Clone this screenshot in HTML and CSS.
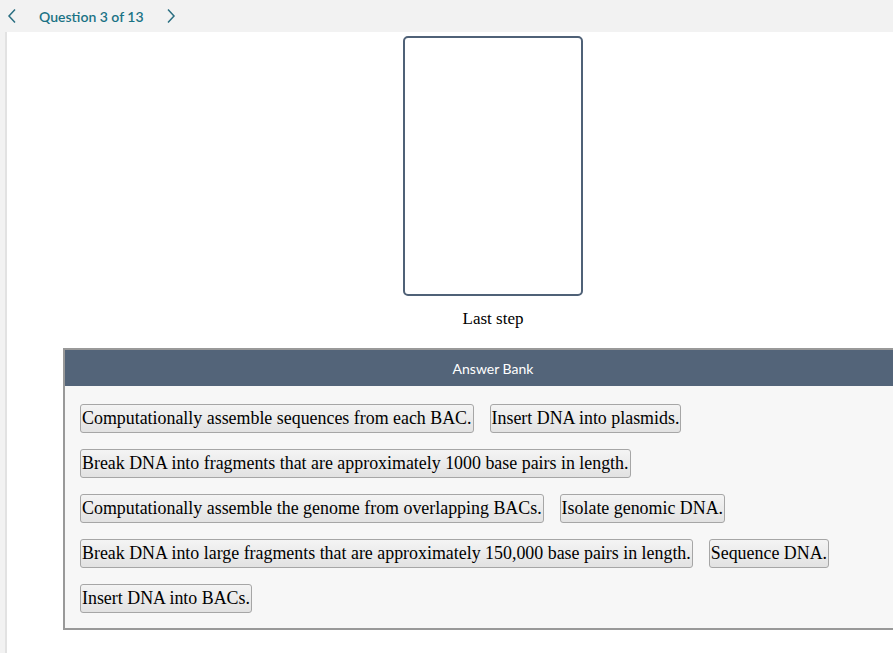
FILE: index.html
```html
<html>
	<head>
		<link rel="stylesheet" href="styles.css">
	</head>
	<body>
		<div class="topbar">
			<svg class="nav" width="10" height="16" viewBox="0 0 10 16"><path d="M8 1.5 L2 8 L8 14.5" /></svg>
			<span class="title">Question 3 of 13</span>
			<svg class="nav" width="10" height="16" viewBox="0 0 10 16"><path d="M2 1.5 L8 8 L2 14.5" /></svg>
		</div>
		<div class="page">
			<div class="content">
				<div class="slot"></div>
				<div class="slot-label">Last step</div>
				<div class="bank">
					<div class="bank-head">Answer Bank</div>
					<div class="bank-body">
						<div class="row">
							<button>Computationally assemble sequences from each BAC.</button>
							<button>Insert DNA into plasmids.</button>
						</div>
						<div class="row">
							<button>Break DNA into fragments that are approximately 1000 base pairs in length.</button>
						</div>
						<div class="row">
							<button>Computationally assemble the genome from overlapping BACs.</button>
							<button>Isolate genomic DNA.</button>
						</div>
						<div class="row">
							<button>Break DNA into large fragments that are approximately 150,000 base pairs in length.</button>
							<button>Sequence DNA.</button>
						</div>
						<div class="row">
							<button>Insert DNA into BACs.</button>
						</div>
					</div>
				</div>
			</div>
		</div>
	</body>
</html>
```

FILE: styles.css
```css
body{
	margin:0;
	background:#f2f2f2;
	overflow:hidden;
	font-family:"Liberation Serif", serif;
}
.topbar{
	height:32px;
	display:flex;
	align-items:center;
	font-family:"Lato", "Open Sans", sans-serif;
	color:#1a7285;
}
.topbar .nav{
	fill:none;
	stroke:#2b6f82;
	stroke-width:1.5;
}
.topbar .nav:first-child{
	margin-left:7px;
}
.title{
	font-size:14px;
	font-weight:600;
	margin:0 22px 0 22px;
}
.page{
	margin-left:5px;
	border-left:2px solid #e2e2e2;
	background:#fff;
	height:621px;
}
.content{
	width:860px;
	margin-left:56px;
	display:flex;
	flex-direction:column;
	align-items:center;
}
.slot{
	margin-top:4px;
	width:176px;
	height:256px;
	border:2px solid #4f6177;
	border-radius:5px;
}
.slot-label{
	font-size:17px;
	margin-top:13px;
	height:20px;
}
.bank{
	margin-top:19px;
	width:856px;
	border:2px solid #999;
	background:#f7f7f7;
	height:278px;
	align-self:flex-start;
}
.bank-head{
	background:#536479;
	color:#fff;
	font-family:"Lato", "Open Sans", sans-serif;
	font-size:14px;
	height:36px;
	line-height:38px;
	text-align:center;
}
.bank-body{
	padding:18px 15px;
	display:flex;
	flex-direction:column;
	gap:16px;
}
.row{
	display:flex;
	gap:16px;
}
button{
	font-family:"Liberation Serif", serif;
	font-size:17.9px;
	color:#000;
	height:29px;
	padding:0 1px;
	border:1px solid #a6a6a6;
	border-radius:3px;
	background:linear-gradient(#f4f4f4, #e2e2e2);
}
```
